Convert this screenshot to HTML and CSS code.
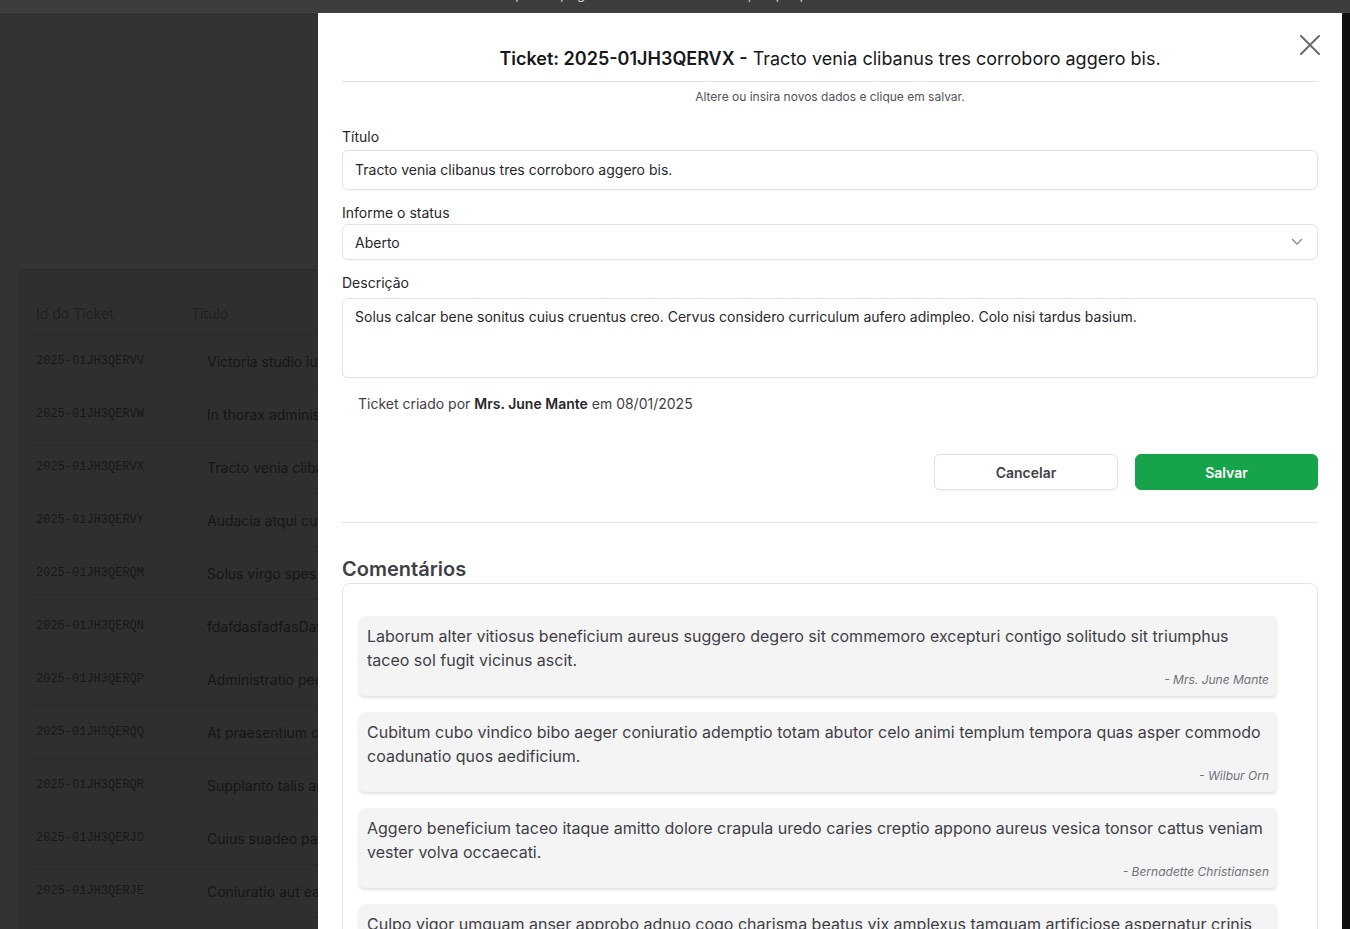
FILE: index.html
```html
<!DOCTYPE html>
<html lang="pt-BR">
<head>
<meta charset="utf-8">
<title>Tickets</title>
<link rel="stylesheet" href="styles.css">
</head>
<body>
<div class="topbar"><span class="topbar-text">Exemplo de página com a lista de tickets, clique para editar</span></div>
<div class="main">
  <div class="page">
    <div class="table-card">
      <div class="thead">
        <div class="c-id">Id do Ticket</div>
        <div class="c-title">Título</div>
      </div>
      <div class="row"><div class="c-id mono">2025-01JH3QERVV</div><div class="c-title pad">Victoria studio iusto cribro</div></div>
      <div class="row"><div class="c-id mono">2025-01JH3QERVW</div><div class="c-title pad">In thorax administratio</div></div>
      <div class="row"><div class="c-id mono">2025-01JH3QERVX</div><div class="c-title pad">Tracto venia clibanus tres</div></div>
      <div class="row"><div class="c-id mono">2025-01JH3QERVY</div><div class="c-title pad">Audacia atqui cursus</div></div>
      <div class="row"><div class="c-id mono">2025-01JH3QERQM</div><div class="c-title pad">Solus virgo spes adicio</div></div>
      <div class="row"><div class="c-id mono">2025-01JH3QERQN</div><div class="c-title pad">fdafdasfadfasDafdas</div></div>
      <div class="row"><div class="c-id mono">2025-01JH3QERQP</div><div class="c-title pad">Administratio pecus</div></div>
      <div class="row"><div class="c-id mono">2025-01JH3QERQQ</div><div class="c-title pad">At praesentium celo</div></div>
      <div class="row"><div class="c-id mono">2025-01JH3QERQR</div><div class="c-title pad">Supplanto talis amor</div></div>
      <div class="row"><div class="c-id mono">2025-01JH3QERJD</div><div class="c-title pad">Cuius suadeo patria</div></div>
      <div class="row"><div class="c-id mono">2025-01JH3QERJE</div><div class="c-title pad">Coniuratio aut eaque</div></div>
      <div class="row"><div class="c-id mono">2025-01JH3QERJF</div><div class="c-title pad">Vesco tergo alius</div></div>
    </div>
  </div>

  <div class="modal">
    <div class="modal-head">
      <h2 class="modal-title"><strong>Ticket: 2025-01JH3QERVX -</strong> Tracto venia clibanus tres corroboro aggero bis.</h2>
      <button class="close" aria-label="Fechar">
        <svg width="20" height="20" viewBox="0 0 20 20"><path d="M1 1 L19 19 M19 1 L1 19" stroke="#6b6b6b" stroke-width="2" fill="none" stroke-linecap="round"/></svg>
      </button>
    </div>
    <p class="modal-sub">Altere ou insira novos dados e clique em salvar.</p>

    <div class="field field-first">
      <label class="label">Título</label>
      <div class="input">Tracto venia clibanus tres corroboro aggero bis.</div>
    </div>
    <div class="field">
      <label class="label label-tight">Informe o status</label>
      <div class="select"><span>Aberto</span>
        <svg width="12" height="8" viewBox="0 0 12 8"><path d="M1.5 1.5 L6 6 L10.5 1.5" stroke="#8a8a8a" stroke-width="1.4" fill="none" stroke-linecap="round" stroke-linejoin="round"/></svg>
      </div>
    </div>
    <div class="field">
      <label class="label label-loose">Descrição</label>
      <div class="textarea">Solus calcar bene sonitus cuius cruentus creo. Cervus considero curriculum aufero adimpleo. Colo nisi tardus basium.</div>
    </div>

    <p class="created">Ticket criado por <strong>Mrs. June Mante</strong> em 08/01/2025</p>

    <div class="actions">
      <button class="btn btn-cancel">Cancelar</button>
      <button class="btn btn-save">Salvar</button>
    </div>

    <hr class="sep">

    <h3 class="comments-title">Comentários</h3>
    <div class="comments">
      <div class="comment">
        <p class="comment-text">Laborum alter vitiosus beneficium aureus suggero degero sit commemoro excepturi contigo solitudo sit triumphus taceo sol fugit vicinus ascit.</p>
        <p class="comment-author">- Mrs. June Mante</p>
      </div>
      <div class="comment">
        <p class="comment-text">Cubitum cubo vindico bibo aeger coniuratio ademptio totam abutor celo animi templum tempora quas asper commodo coadunatio quos aedificium.</p>
        <p class="comment-author">- Wilbur Orn</p>
      </div>
      <div class="comment">
        <p class="comment-text">Aggero beneficium taceo itaque amitto dolore crapula uredo caries creptio appono aureus vesica tonsor cattus veniam vester volva occaecati.</p>
        <p class="comment-author">- Bernadette Christiansen</p>
      </div>
      <div class="comment">
        <p class="comment-text">Culpo vigor umquam anser approbo adnuo cogo charisma beatus vix amplexus tamquam artificiose aspernatur crinis adsum comis.</p>
        <p class="comment-author">- Wilbur Orn</p>
      </div>
    </div>
  </div>

  <div class="scroll-strip"></div>
</div>
</body>
</html>
```

FILE: styles.css
```css
* { box-sizing: border-box; }
html, body {
  margin: 0;
  padding: 0;
  height: 929px;
  overflow: hidden;
  background: #333333;
  font-family: Inter, "Noto Sans", "Liberation Sans", sans-serif;
}
.topbar {
  height: 13px;
  background: #3d3d3d;
  border-bottom: 1px solid #444;
  overflow: hidden;
  display: flex;
  align-items: flex-end;
  justify-content: center;
}
.topbar-text {
  color: #cfcfcf;
  font-size: 14px;
  line-height: 37px;
  white-space: nowrap;
}
.main {
  display: flex;
  height: 916px;
}
.page {
  width: 318px;
  flex: none;
  overflow: hidden;
  padding: 256px 0 0 19px;
  background: #333333;
}
.table-card {
  width: 1290px;
  background: #2f2f2f;
  border: 1px solid #2b2b2b;
  border-radius: 8px;
  padding: 22px 8px 0;
}
.thead, .row {
  display: flex;
  align-items: center;
  border-bottom: 1px solid #2a2a2a;
}
.thead { height: 43px; color: #1f1f1f; font-size: 14px; }
.row { height: 53px; color: #151515; font-size: 14px; }
.c-id { width: 163px; padding-left: 8px; flex: none; }
.c-title { flex: 1; white-space: nowrap; }
.c-title.pad { padding-left: 16px; }
.mono { font-family: "Liberation Mono", "DejaVu Sans Mono", monospace; font-size: 12px; color: #171717; }

.modal {
  flex: 1;
  background: #ffffff;
  padding: 0 24px;
  overflow: hidden;
}
.modal-head {
  position: relative;
  padding: 32px 0 8px;
  border-bottom: 1px solid #e4e4e7;
}
.modal-title {
  margin: 0;
  text-align: center;
  font-size: 18px;
  line-height: 28px;
  font-weight: 400;
  color: #18181b;
}
.modal-title strong { font-weight: 600; }
.close {
  position: absolute;
  right: -2px;
  top: 22px;
  background: none;
  border: 0;
  padding: 0;
  width: 20px;
  height: 20px;
}
.modal-sub {
  margin: 7px 0 0;
  text-align: center;
  font-size: 12px;
  line-height: 16px;
  color: #52525b;
}
.field { margin-top: 12px; }
.field-first { margin-top: 21px; }
.label {
  display: block;
  font-size: 14px;
  line-height: 20px;
  padding-top: 1px;
  color: #27272a;
  margin-bottom: 3px;
}
.label-tight { margin-bottom: 1px; }
.label-loose { margin-bottom: 5px; }
.input, .select, .textarea {
  border: 1px solid #e4e4e7;
  border-radius: 6px;
  font-size: 14px;
  color: #27272a;
  padding: 0 12px;
  box-shadow: 0 1px 2px rgba(0,0,0,0.04);
}
.input { height: 40px; line-height: 38px; }
.select {
  height: 36px;
  display: flex;
  align-items: center;
  justify-content: space-between;
  padding-right: 14px;
}
.textarea { height: 80px; padding-top: 8px; line-height: 20px; }
.created {
  margin: 16px 0 0 16px;
  font-size: 14px;
  line-height: 20px;
  color: #3f3f46;
}
.created strong { font-weight: 600; color: #27272a; }
.actions {
  display: flex;
  justify-content: flex-end;
  gap: 17px;
  margin-top: 40px;
}
.btn {
  height: 36px;
  width: 184px;
  border-radius: 6px;
  font-family: inherit;
  font-size: 14px;
  font-weight: 600;
}
.btn-cancel { background: #fff; border: 1px solid #e4e4e7; color: #3f3f46; box-shadow: 0 1px 2px rgba(0,0,0,0.05); }
.btn-save { background: #16a34a; border: 1px solid #16a34a; color: #fff; width: 183px; }
.sep { border: 0; border-top: 1px solid #e4e4e7; margin: 32px 0 0; }
.comments-title {
  margin: 33px 0 0;
  font-size: 20px;
  line-height: 26px;
  font-weight: 600;
  color: #3f3f46;
}
.comments {
  margin-top: 1px;
  border: 1px solid #e4e4e7;
  border-radius: 8px;
  padding: 32px 40px 16px 16px;
  display: flex;
  flex-direction: column;
  gap: 16px;
}
.comment {
  background: #f4f4f5;
  border-radius: 6px;
  padding: 8px;
  box-shadow: 0 2px 3px rgba(0,0,0,0.12);
}
.comment-text {
  margin: 0;
  font-size: 16px;
  line-height: 24px;
  color: #3f3f46;
}
.comment-author {
  margin: 0;
  text-align: right;
  font-size: 12px;
  line-height: 16px;
  font-style: italic;
  color: #71717a;
}
.scroll-strip {
  width: 8px;
  flex: none;
  background: #111111;
}
```
